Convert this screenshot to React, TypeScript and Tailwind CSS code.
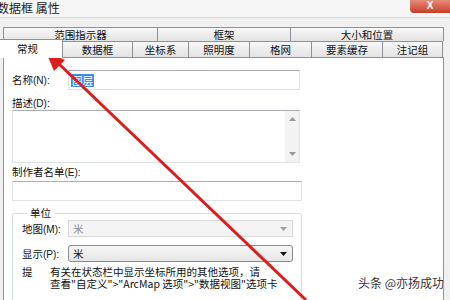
const tabsBack = [
  { label: "范围指示器", w: "w-[155px]" },
  { label: "框架", w: "w-[134px]" },
  { label: "大小和位置", w: "w-[154px]" },
];

const tabsFront = [
  { label: "数据框", w: "w-[71px]" },
  { label: "坐标系", w: "w-[57px]" },
  { label: "照明度", w: "w-[62px]" },
  { label: "格网", w: "w-[63px]" },
  { label: "要素缓存", w: "w-[72px]" },
  { label: "注记组", w: "w-[61px]" },
];

function Caret({ color }: { color: string }) {
  return (
    <svg width="7" height="4" viewBox="0 0 7 4" aria-hidden>
      <path d="M0 0h7L3.5 4z" fill={color} />
    </svg>
  );
}

function Label({ text, hot }: { text: string; hot: string }) {
  return (
    <span className="whitespace-nowrap">
      {text}
      <span className="font-['Liberation_Sans',sans-serif] text-[10px]">({hot}):</span>
    </span>
  );
}

export default function App() {
  return (
    <div className="relative flex h-[300px] w-[450px] flex-col overflow-hidden bg-[#f0f0f0] font-['Noto_Sans_CJK_SC',sans-serif] text-[10.5px] text-[#111]">
      {/* title bar */}
      <div className="flex h-[18px] shrink-0 items-start justify-between border-b border-[#dadada] bg-[#f6f6f6]">
        <span className="-ml-[3px] mt-[1px] text-[12px] leading-[14px] text-[#222]">数据框 属性</span>
        <div className="flex h-[13px] w-[40px] items-center justify-center rounded-bl-[4px] bg-gradient-to-b from-[#e58b78] to-[#c63b24] pb-[2px] font-['Liberation_Sans',sans-serif] text-[10px] font-bold leading-none text-white">
          X
        </div>
      </div>
      <div className="h-[9px] shrink-0" />

      {/* back tab row */}
      <div className="ml-[3px] flex h-[14px] shrink-0">
        {tabsBack.map((t, i) => (
          <div
            key={t.label}
            className={`${t.w} ${i > 0 ? "-ml-px" : ""} flex items-center justify-center border border-b-0 border-[#8e9199] bg-gradient-to-b from-[#f7f7f7] to-[#e3e3e3] leading-[13px]`}
          >
            {t.label}
          </div>
        ))}
      </div>

      {/* front tab row */}
      <div className="-ml-[8px] flex h-[16px] shrink-0 items-end">
        <div className="relative z-10 -mb-px flex h-[19px] w-[71px] items-center justify-center border border-b-0 border-[#8e9199] bg-white pb-[2px] leading-[13px]">
          常规
        </div>
        {tabsFront.map((t) => (
          <div
            key={t.label}
            className={`${t.w} -ml-px flex h-[16px] items-center justify-center border border-b-0 border-[#8e9199] bg-gradient-to-b from-[#f7f7f7] to-[#e3e3e3] leading-[13px]`}
          >
            {t.label}
          </div>
        ))}
      </div>

      {/* panel */}
      <div className="ml-[3px] w-[441px] flex-1 border border-b-0 border-[#8e9199] bg-white pl-[8px] pt-[12px]">
        <div className="flex h-[20px] items-center">
          <span className="w-[56px]"><Label text="名称" hot="N" /></span>
          <div className="flex h-[20px] w-[232px] items-center border border-[#dfe4ea] border-t-[#abadb3] pl-[2px]">
            <span className="bg-[#3b8ee2] px-[1px] leading-[13px] text-white">图层</span>
          </div>
        </div>

        <div className="mt-[6px] h-[14px] leading-[14px]"><Label text="描述" hot="D" /></div>
        <div className="flex h-[53px] w-[288px] border border-[#dfe4ea] border-t-[#abadb3]">
          <div className="flex-1" />
          <div className="flex w-[14px] flex-col items-center justify-between bg-[#f3f3f3] py-[6px]">
            <svg width="7" height="4" viewBox="0 0 7 4" aria-hidden>
              <path d="M0 4h7L3.5 0z" fill="#9a9a9a" />
            </svg>
            <Caret color="#9a9a9a" />
          </div>
        </div>

        <div className="mt-[2px] h-[14px] leading-[14px]"><Label text="制作者名单" hot="E" /></div>
        <div className="mt-[2px] h-[20px] w-[290px] border border-[#dfe4ea] border-t-[#abadb3]" />

        <fieldset className="mt-[5px] h-[120px] w-[290px] rounded-[2px] border border-[#d5dfe5] pl-[9px]">
          <legend className="ml-[5px] px-[3px] leading-[14px]">单位</legend>
          <div className="flex h-[17px] items-center">
            <span className="w-[46px]"><Label text="地图" hot="M" /></span>
            <div className="flex h-[17px] w-[225px] items-center justify-between border border-[#d9d9d9] bg-[#f4f4f4] pl-[4px] pr-[5px] text-[#8f8f8f]">
              <span className="leading-[13px]">米</span>
              <Caret color="#a0a0a0" />
            </div>
          </div>
          <div className="mt-[8px] flex h-[17px] items-center">
            <span className="w-[46px]"><Label text="显示" hot="P" /></span>
            <div className="flex h-[17px] w-[225px] items-center justify-between rounded-[3px] border border-[#8a8a8a] bg-gradient-to-b from-[#f6f6f6] to-[#e6e6e6] pl-[4px] pr-[5px]">
              <span className="leading-[13px]">米</span>
              <Caret color="#111" />
            </div>
          </div>
          <div className="mt-[4px] flex">
            <span className="w-[28px] leading-[12px]">提</span>
            <p className="whitespace-nowrap text-[10.5px] leading-[12px]">
              有关在状态栏中显示坐标所用的其他选项，请
              <br />
              查看"自定义"&gt;"ArcMap 选项"&gt;"数据视图"选项卡
            </p>
          </div>
        </fieldset>
      </div>

      {/* annotation arrow */}
      <svg className="pointer-events-none absolute left-0 top-0" width="450" height="300" aria-hidden>
        <line x1="58" y1="63" x2="306" y2="300" stroke="#e01b1b" strokeWidth="3" />
        <polygon points="46,52 54,71 65,60" fill="#e01b1b" />
      </svg>

      {/* watermark */}
      <span className="absolute left-[358px] top-[275px] text-[12px] leading-[16px] text-[#333] [text-shadow:0_0_2px_#fff,0_0_2px_#fff]">
        头条 @亦扬成功
      </span>
    </div>
  );
}
